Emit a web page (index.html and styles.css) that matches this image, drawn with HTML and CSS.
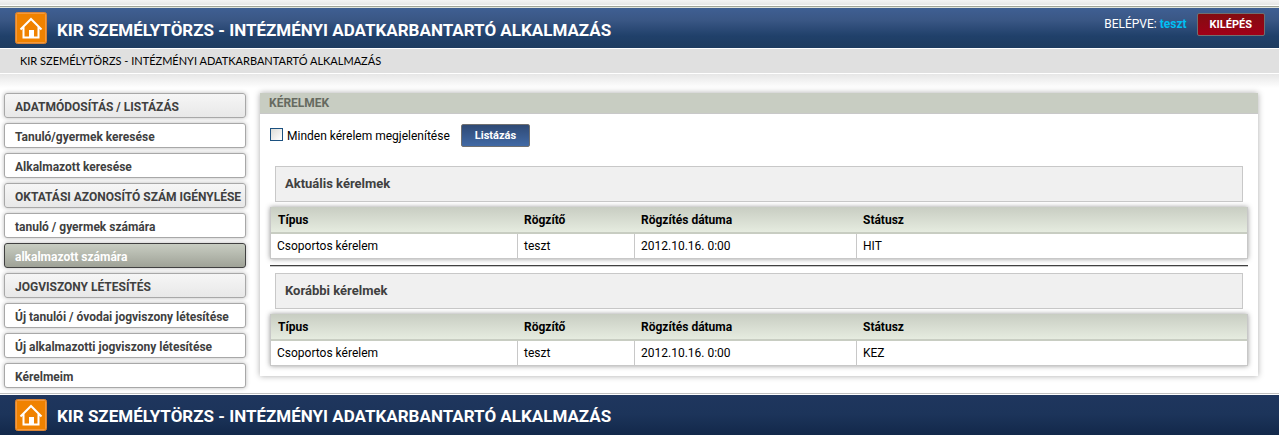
FILE: index.html
```
<!DOCTYPE html>
<html lang="hu">
<head>
  <meta charset="UTF-8">
  <meta name="viewport" content="width=device-width, initial-scale=1.0">
  <title>KIR Személytörzs - Intézményi adatkarbantartó alkalmazás</title>
  <link rel="stylesheet" href="styles.css">
</head>
<body>

  <div class="top-strip"></div>

  <header class="banner">
    <a class="home" href="#" aria-label="Kezdőlap">
      <svg width="32" height="32" viewBox="0 0 32 32">
        <rect x="0.5" y="0.5" width="31" height="31" rx="2" fill="#f08200" stroke="#d98436"/>
        <rect x="1.5" y="1.5" width="29" height="29" rx="1" fill="none" stroke="#f59a3c"/>
        <path d="M5.500 17.500L16 7l10.500 10.500M8.500 15v10.500h15V15" fill="none" stroke="#fff" stroke-width="2"/>
        <rect x="14" y="18" width="5" height="8" fill="#fff"/>
      </svg>
    </a>
    <h1>KIR SZEMÉLYTÖRZS - INTÉZMÉNYI ADATKARBANTARTÓ ALKALMAZÁS</h1>
    <div class="user">
      <span>BELÉPVE: <strong>teszt</strong></span>
      <button type="button" class="btn btn-logout">KILÉPÉS</button>
    </div>
  </header>

  <div class="breadcrumb">KIR SZEMÉLYTÖRZS - INTÉZMÉNYI ADATKARBANTARTÓ ALKALMAZÁS</div>

  <div class="content">
    <nav class="menu">
      <h2 class="menu-title">ADATMÓDOSÍTÁS / LISTÁZÁS</h2>
      <a href="#">Tanuló/gyermek keresése</a>
      <a href="#">Alkalmazott keresése</a>
      <h2 class="menu-title">OKTATÁSI AZONOSÍTÓ SZÁM IGÉNYLÉSE</h2>
      <a href="#">tanuló / gyermek számára</a>
      <a href="#" class="active">alkalmazott számára</a>
      <h2 class="menu-title">JOGVISZONY LÉTESÍTÉS</h2>
      <a href="#">Új tanulói / óvodai jogviszony létesítése</a>
      <a href="#">Új alkalmazotti jogviszony létesítése</a>
      <a href="#">Kérelmeim</a>
    </nav>

    <main class="panel">
      <h2 class="panel-title">KÉRELMEK</h2>
      <div class="panel-body">
        <form class="filter">
          <input type="checkbox" id="minden">
          <label for="minden">Minden kérelem megjelenítése</label>
          <button type="button" class="btn btn-list">Listázás</button>
        </form>

        <h3 class="box">Aktuális kérelmek</h3>
        <table>
          <thead>
            <tr>
              <th class="col-type">Típus</th>
              <th class="col-user">Rögzítő</th>
              <th class="col-date">Rögzítés dátuma</th>
              <th>Státusz</th>
            </tr>
          </thead>
          <tbody>
            <tr>
              <td>Csoportos kérelem</td>
              <td>teszt</td>
              <td>2012.10.16. 0:00</td>
              <td>HIT</td>
            </tr>
          </tbody>
        </table>

        <hr>

        <h3 class="box">Korábbi kérelmek</h3>
        <table>
          <thead>
            <tr>
              <th class="col-type">Típus</th>
              <th class="col-user">Rögzítő</th>
              <th class="col-date">Rögzítés dátuma</th>
              <th>Státusz</th>
            </tr>
          </thead>
          <tbody>
            <tr>
              <td>Csoportos kérelem</td>
              <td>teszt</td>
              <td>2012.10.16. 0:00</td>
              <td>KEZ</td>
            </tr>
          </tbody>
        </table>
      </div>
    </main>
  </div>

  <footer class="banner banner-bottom">
    <a class="home" href="#" aria-label="Kezdőlap">
      <svg width="32" height="32" viewBox="0 0 32 32">
        <rect x="0.5" y="0.5" width="31" height="31" rx="2" fill="#f08200" stroke="#d98436"/>
        <rect x="1.5" y="1.5" width="29" height="29" rx="1" fill="none" stroke="#f59a3c"/>
        <path d="M5.500 17.500L16 7l10.500 10.500M8.500 15v10.500h15V15" fill="none" stroke="#fff" stroke-width="2"/>
        <rect x="14" y="18" width="5" height="8" fill="#fff"/>
      </svg>
    </a>
    <p class="banner-text">KIR SZEMÉLYTÖRZS - INTÉZMÉNYI ADATKARBANTARTÓ ALKALMAZÁS</p>
  </footer>

</body>
</html>
```
FILE: styles.css
```
:root {
  --font: "Trebuchet MS", Roboto, sans-serif;
  --sage: #c8cdc2;
  --line: #c8c8c8;
  --text: #404040;
}

* {
  box-sizing: border-box;
  margin: 0;
  padding: 0;
}

body {
  font-family: var(--font);
  font-size: 12px;
  line-height: 16px;
  color: #000;
  background: #fff;
}

.top-strip {
  height: 8px;
  background: linear-gradient(#f4f4f4, #e6e6e6) no-repeat 0 0 / 100% 5px;
  border-bottom: 1px solid #e0e4dc;
  box-shadow: inset 0 -1px 0 #a0a498;
}

.banner {
  display: flex;
  align-items: center;
  gap: 10px;
  height: 40px;
  padding: 0 14px 0 15px;
  color: #fff;
  background: linear-gradient(#3f5f93, #3a5785 30%, #20406a 70%, #1e3c60);
}

.home svg {
  display: block;
}

.banner h1,
.banner-text {
  font-size: 17px;
  font-weight: bold;
  line-height: 24px;
  padding-top: 3px;
}

.user {
  display: flex;
  align-items: center;
  gap: 10px;
  margin: 0 0 8px auto;
}

.user strong {
  color: #00bff3;
}

.btn {
  height: 23px;
  padding: 0 12px;
  font-family: var(--font);
  font-size: 11px;
  font-weight: bold;
  color: #fff;
  border: 1px solid #707070;
  border-radius: 2px;
  cursor: pointer;
}

.btn-logout {
  background: linear-gradient(#830c10, #a00018);
}

.btn-list {
  margin-left: 7px;
  padding: 0 13px;
  background: linear-gradient(#2f4a75, #4169a5);
}

.breadcrumb {
  padding: 4px 20px;
  font-family: "Trebuchet MS", Lato, sans-serif;
  font-size: 11px;
  background: #e0e0e0;
  border-top: 1px solid #fff;
  border-bottom: 1px solid #fff;
}

.content {
  display: flex;
  align-items: flex-start;
  gap: 14px;
  padding: 19px 21px 5px 4px;
  background: linear-gradient(#e6e6e6, #fff) no-repeat 0 0 / 100% 14px;
}

.menu {
  display: flex;
  flex-direction: column;
  gap: 5px;
  width: 242px;
}

.menu-title,
.menu a {
  padding: 5px 0 2px 10px;
  font-size: 12px;
  font-weight: bold;
  line-height: 16px;
  white-space: nowrap;
  color: var(--text);
  text-decoration: none;
  background: #fff;
  border: 1px solid #a8a8a8;
  border-radius: 3px;
  box-shadow: 0 0 4px #bbb;
}

.menu .menu-title {
  background: linear-gradient(#f6f6f6, #e8e8e8);
}

.menu .active {
  color: #fff;
  background: linear-gradient(#c8cdc2, #9fa297);
  border-color: #404040;
}

.panel {
  flex: 1;
  background: #fff;
  box-shadow: 0 0 6px #aaa;
}

.panel-title {
  padding: 2px 9px;
  font-size: 12px;
  line-height: 16px;
  color: #666a60;
  background: var(--sage);
  border-bottom: 1px solid var(--line);
}

.panel-body {
  padding: 10px;
}

.filter {
  display: flex;
  align-items: center;
  gap: 4px;
  margin-bottom: 19px;
}

.filter input {
  appearance: none;
  width: 13px;
  height: 13px;
  margin-bottom: 3px;
  background: linear-gradient(135deg, #dcdcd7, #fff);
  border: 1px solid #1c5180;
}

.box {
  margin: 0 5px 5px;
  padding: 9px;
  font-size: 13px;
  line-height: 16px;
  color: var(--text);
  background: #f0f0f0;
  border: 1px solid var(--line);
}

table {
  width: 100%;
  table-layout: fixed;
  border-collapse: separate;
  border-spacing: 0;
  border: 1px solid var(--line);
  border-top: 0;
  box-shadow: 0 0 5px #999;
}

th,
td {
  padding: 4px 6px;
  text-align: left;
  line-height: 16px;
}

thead {
  background: linear-gradient(#c8cdc2, #e8eee2);
}

th {
  padding: 5px 7px 4px;
  border-bottom: 2px solid var(--sage);
}

td + td {
  border-left: 1px solid var(--line);
}

.col-type {
  width: 246px;
}

.col-user {
  width: 117px;
}

.col-date {
  width: 222px;
}

hr {
  margin: 6px 0;
  border: 0;
  border-top: 1px solid #404040;
  border-bottom: 1px solid var(--line);
}

.banner-bottom {
  height: 42px;
  border-top: 1px solid #c0c0c0;
  box-shadow: inset 0 1px 0 #fff;
  background: linear-gradient(#1f365e, #1c345a 50%, #12284a);
}
```
